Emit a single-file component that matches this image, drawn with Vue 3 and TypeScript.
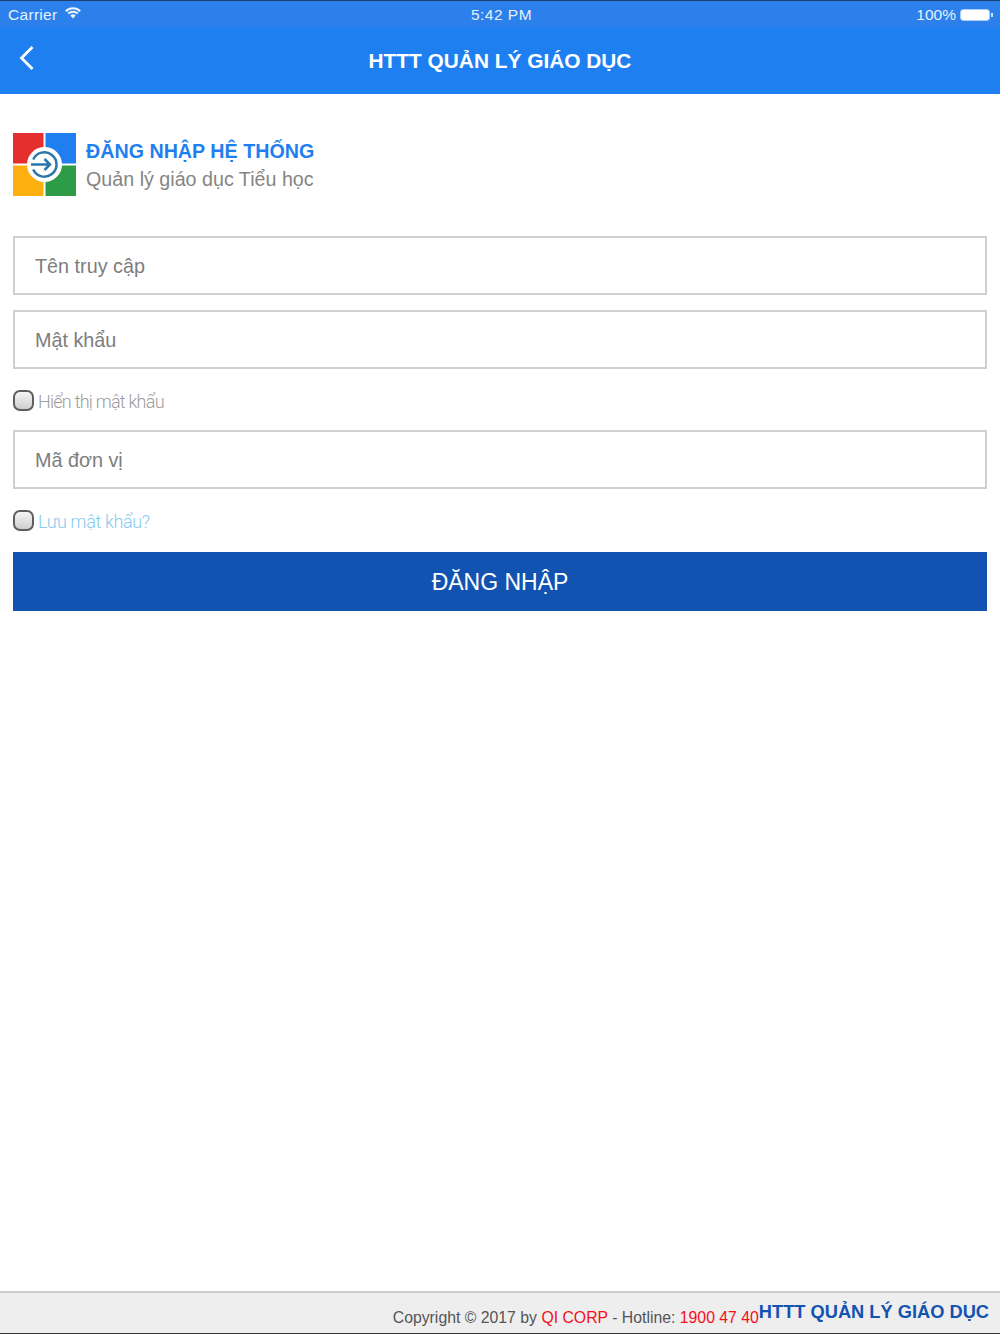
<script setup lang="ts">
const placeholders = { user: 'Tên truy cập', pass: 'Mật khẩu', unit: 'Mã đơn vị' }
</script>

<template>
  <div class="page">
    <header class="header">
      <div class="status">
        <div class="status-left">
          <span>Carrier</span>
          <svg class="wifi" width="16" height="12" viewBox="0 0 16 12">
            <path d="M0.8 4.2 A10.5 10.5 0 0 1 15.2 4.2" fill="none" stroke="#fff" stroke-width="2" opacity=".92" />
            <path d="M3.2 6.6 A7 7 0 0 1 12.8 6.6" fill="none" stroke="#fff" stroke-width="2" opacity=".92" />
            <path d="M5.3 8.6 A3.8 3.8 0 0 1 10.7 8.6 L8 11.6 Z" fill="#fff" opacity=".92" />
          </svg>
        </div>
        <div class="status-time">5:42 PM</div>
        <div class="status-right">
          <span>100%</span>
          <span class="battery"><span class="battery-fill"></span></span>
          <span class="battery-tip"></span>
        </div>
      </div>
      <div class="nav">
        <svg class="back" width="16" height="26" viewBox="0 0 16 26">
          <path d="M14.5 2 L3.5 13 L14.5 24" fill="none" stroke="#fff" stroke-width="2.8" />
        </svg>
        <h1 class="title">HTTT QUẢN LÝ GIÁO DỤC</h1>
      </div>
    </header>

    <main class="main">
      <div class="brand">
        <svg class="logo" width="63" height="63" viewBox="0 0 63 63">
          <rect x="0" y="0" width="30.5" height="30.5" fill="#e52e2e" />
          <rect x="32.5" y="0" width="30.5" height="30.5" fill="#1f7ff0" />
          <rect x="0" y="32.5" width="30.5" height="30.5" fill="#fdb00f" />
          <rect x="32.5" y="32.5" width="30.5" height="30.5" fill="#2e9b46" />
          <circle cx="31.5" cy="31.5" r="17.5" fill="#fff" />
          <path d="M20.2 26.5 A12.2 12.2 0 1 1 20.2 36.5" fill="none" stroke="#2a76ab" stroke-width="2.5" />
          <path d="M18 31.5 H37 M31.5 26 L37 31.5 L31.5 37" fill="none" stroke="#2a76ab" stroke-width="2.5" />
        </svg>
        <div class="brand-text">
          <div class="brand-title">ĐĂNG NHẬP HỆ THỐNG</div>
          <div class="brand-sub">Quản lý giáo dục Tiểu học</div>
        </div>
      </div>

      <div class="form">
        <input class="field" type="text" :placeholder="placeholders.user" />
        <input class="field field-pass" type="text" :placeholder="placeholders.pass" />
        <label class="check check-show">
          <span class="box"></span>
          <span class="check-label">Hiển thị mật khẩu</span>
        </label>
        <input class="field" type="text" :placeholder="placeholders.unit" />
        <label class="check check-save">
          <span class="box"></span>
          <span class="check-label link">Lưu mật khẩu?</span>
        </label>
        <button class="submit" type="button">ĐĂNG NHẬP</button>
      </div>
    </main>

    <footer class="footer">
      <span class="copyright">Copyright © 2017 by <span class="red">QI CORP</span> - Hotline: <span class="red">1900 47 40</span></span>
      <span class="footer-brand">HTTT QUẢN LÝ GIÁO DỤC</span>
    </footer>
  </div>
</template>

<style>
html, body { margin: 0; padding: 0; background: #fff; }
</style>

<style scoped>
.page {
  width: 1000px;
  height: 1334px;
  display: flex;
  flex-direction: column;
  font-family: "Liberation Sans", Arial, sans-serif;
  background: #fff;
  overflow: hidden;
}
.header { background: #1e7ff0; height: 94px; flex: none; }
.status {
  height: 27px;
  box-sizing: border-box;
  background: #2c80ec;
  border-top: 1px solid #1d3f70;
  color: #e6f0fd;
  font-size: 15.5px;
  display: grid;
  grid-template-columns: 1fr auto 1fr;
  align-items: center;
  padding: 1px 7px 0 8px;
}
.status-left { display: flex; align-items: center; gap: 8px; letter-spacing: .3px; }
.wifi { margin-top: -3px; }
.status-time { font-size: 15.5px; padding-left: 2px; letter-spacing: .5px; }
.status-right { display: flex; align-items: center; justify-content: flex-end; }
.battery {
  width: 30px;
  height: 12px;
  box-sizing: border-box;
  border: 1px solid #a9ccf8;
  border-radius: 3px;
  margin-left: 4px;
  display: flex;
}
.battery-fill { flex: 1; background: #fff; border-radius: 2px; }
.battery-tip { width: 2px; height: 4px; background: #cfe2fb; margin-left: 1px; }
.nav {
  height: 67px;
  display: flex;
  align-items: center;
  justify-content: center;
  position: relative;
}
.back { position: absolute; left: 18px; top: 18px; }
.title {
  margin: 0;
  color: #fff;
  font-size: 20.85px;
  font-weight: 700;
  line-height: 67px;
}
.main { flex: 1; padding: 39px 13px 0; }
.brand { display: flex; align-items: center; gap: 10px; }
.logo { flex: none; }
.brand-title { color: #1f7ff0; font-size: 19.7px; font-weight: 700; line-height: 28px; }
.brand-sub { color: #858585; font-size: 19.7px; line-height: 28px; }
.form { display: flex; flex-direction: column; margin-top: 40px; }
.field {
  height: 59px;
  box-sizing: border-box;
  width: 100%;
  border: 2px solid #d0d0d0;
  padding: 2px 20px 0;
  font: 19.8px "Liberation Sans", Arial, sans-serif;
  color: #555;
  background: #fff;
  outline: none;
  border-radius: 0;
}
.field::placeholder { color: #7d7d7d; opacity: 1; }
.field-pass { margin-top: 15px; }
.check { display: flex; align-items: center; gap: 4px; height: 21px; margin: 21px 0 19px; }
.check-save { margin: 21px 0 21px; }
.box {
  width: 21px;
  height: 21px;
  flex: none;
  box-sizing: border-box;
  border: 2px solid #5f5f5f;
  border-radius: 7px;
  background: linear-gradient(#f4f4f4, #cfcfcf);
}
.check-label {
  font-family: Roboto, "Liberation Sans", sans-serif;
  font-size: 18px;
  color: #9c9c9c;
  font-weight: 300;
  padding-top: 2px;
  letter-spacing: -.75px;
}
.link { color: #86caf0; letter-spacing: -.35px; }
.submit {
  height: 59px;
  border: 0;
  background: #1253b2;
  color: #fff;
  font: 23px "Liberation Sans", Arial, sans-serif;
  padding: 2px 0 0;
}
.footer {
  height: 43px;
  flex: none;
  box-sizing: border-box;
  background: #eeeeee;
  border-top: 2px solid #cccccc;
  border-bottom: 1px solid #333;
  display: flex;
  justify-content: flex-end;
  padding-right: 11px;
}
.copyright { color: #555; font-size: 15.8px; line-height: 49px; }
.red { color: #f40f20; }
.footer-brand { color: #1253b2; font-size: 18.25px; font-weight: 700; line-height: 37px; }
</style>
